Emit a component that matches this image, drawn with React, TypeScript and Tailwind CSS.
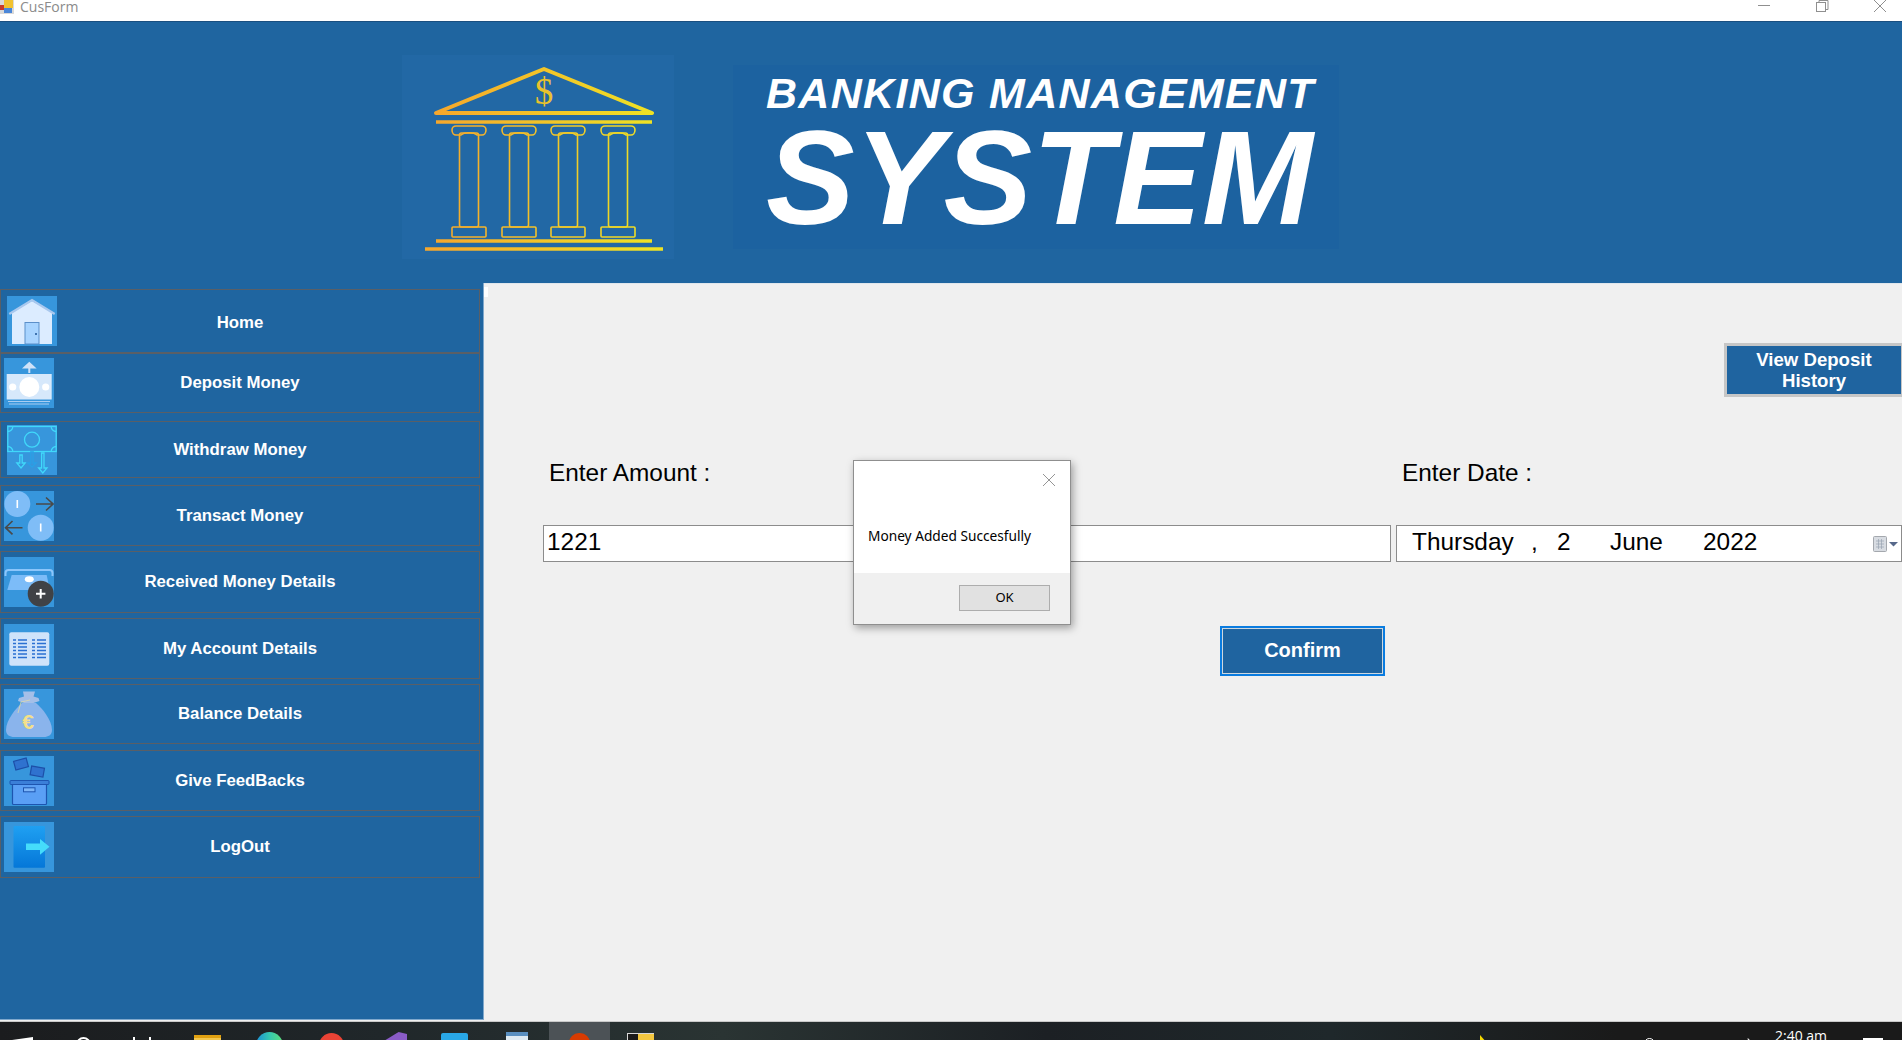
import { FC, ReactNode } from "react";

const IconBox: FC<{ children: ReactNode; className: string }> = ({ children, className }) => (
  <svg viewBox="0 0 50 50" className={`w-[50px] h-[50px] shrink-0 bg-[#3796dc] ${className}`}>
    {children}
  </svg>
);

const HomeIcon = () => (
  <>
    <path d="M5 16 25 5l20 11v32H5z" fill="#dcecff" />
    <path d="M2.3 18 25 4l22.7 14" fill="none" stroke="#a9c8ee" strokeWidth="2.2" />
    <rect x="18" y="26.5" width="14" height="21.5" fill="#a8d4ff" stroke="#5b8fc9" strokeWidth="1" />
    <rect x="28" y="37" width="2" height="2" fill="#3f74b0" />
  </>
);

const DepositIcon = () => (
  <>
    <path d="M25.3 15V8M20.5 9.5l4.8-4.5 4.8 4.5z" stroke="#cfe2f8" strokeWidth="2" fill="#cfe2f8" />
    <rect x="2.7" y="16" width="45" height="25.5" fill="#d6e8fb" />
    <circle cx="25.3" cy="29" r="10" fill="#fff" />
    <circle cx="8.7" cy="29" r="3.6" fill="#fff" />
    <circle cx="41.7" cy="29" r="3.6" fill="#fff" />
    <path d="M4 43.5h42M5 46h40" stroke="#a9cdf2" strokeWidth="1" />
  </>
);

const WithdrawIcon = () => (
  <g fill="none" stroke="#40d8fa" strokeWidth="1.3">
    <rect x="0.8" y="1.5" width="48.4" height="25" />
    <circle cx="25" cy="14.7" r="7.5" />
    <path d="M.8 6.5a5 5 0 0 0 5-5M44.2 1.5a5 5 0 0 0 5 5M.8 21.5a5 5 0 0 1 5 5M44.2 26.5a5 5 0 0 1 5-5" />
    <path d="M12.8 30h2.4v8h3l-4.2 5-4.2-5h3z" />
    <path d="M23.8 27h2.4v11h3l-4.2 4-4.2-4h3z" stroke="#2aa0e6" />
    <path d="M34.6 28h2.4v15h3l-4.2 5-4.2-5h3z" />
  </g>
);

const TransactIcon = () => (
  <>
    <circle cx="13.3" cy="13" r="13" fill="#7fbdf7" />
    <circle cx="36.7" cy="36.7" r="13" fill="#7fbdf7" />
    <path d="M13.3 9v8M36.7 32.5v8" stroke="#fff" strokeWidth="1.6" />
    <path d="M32 13h17M42 6.5l7 6.5-7 6.5M18.5 36.7H1.5M8.5 30l-7 6.7 7 6.7" fill="none" stroke="#4a4a4a" strokeWidth="1.6" />
  </>
);

const ReceivedIcon = () => (
  <>
    <path d="M1.5 19v-3q0-3 3-3h41q3 0 3 3v3" fill="none" stroke="#8cc6fb" strokeWidth="2" />
    <path d="M7.7 18h35l3 15H3.3z" fill="#7cbcf8" />
    <ellipse cx="25.3" cy="22.3" rx="4.5" ry="3" fill="#fff" />
    <circle cx="36.7" cy="36.7" r="13" fill="#404246" />
    <path d="M36.7 32v9.4M32 36.7h9.4" stroke="#fff" strokeWidth="2" />
  </>
);

const AccountIcon = () => (
  <>
    <rect x="5.3" y="8.3" width="40" height="33.4" rx="2" fill="#cfe3fa" />
    <path
      d="M9 16h3M14 16h9M28 16h3M33 16h9M9 19.5h3M14 19.5h9M28 19.5h3M33 19.5h9M9 23h3M14 23h9M28 23h3M33 23h9M9 26.5h3M14 26.5h9M28 26.5h3M33 26.5h9M9 30h3M14 30h9M28 30h3M33 30h9M9 33.5h3M14 33.5h9M28 33.5h3M33 33.5h9"
      stroke="#2a70d2"
      strokeWidth="1.5"
    />
  </>
);

const BalanceIcon = () => (
  <>
    <path d="M19 2.5h12l-1.5 5 5 1.5 1 3-6 2H20l-6-2 1-3 5-1.5z" fill="#a4bfe8" />
    <path d="M18 14h14c6 5 16 17 16 27 0 5-4 7-8 7H10c-4 0-8-2-8-7 0-10 10-22 16-27z" fill="#8ab4ec" />
    <path d="M14 24l3-11 9-2" fill="none" stroke="#e8dca0" strokeWidth="0.7" />
    <text x="24" y="40" textAnchor="middle" fontSize="21" fill="#f3e08a" fontFamily="'Liberation Sans', sans-serif">
      €
    </text>
  </>
);

const FeedbackIcon = () => (
  <>
    <rect x="10.5" y="3.5" width="13" height="9" transform="rotate(-15 17 8)" fill="#2f72cf" stroke="#1d4fa8" strokeWidth="1.2" />
    <rect x="26.8" y="11" width="13" height="9" transform="rotate(10 33 15.5)" fill="#2f72cf" stroke="#1d4fa8" strokeWidth="1.2" />
    <rect x="8.5" y="28" width="34" height="20.5" rx="1" fill="#5a9ff5" stroke="#1d55b0" strokeWidth="1.2" />
    <rect x="6" y="24.5" width="39" height="4" rx="1" fill="#3b7fd8" stroke="#1d55b0" strokeWidth="1" />
    <rect x="19.5" y="31.8" width="11.5" height="4" fill="#7db5f8" stroke="#1d55b0" strokeWidth="1" />
  </>
);

const LogoutIcon = () => (
  <>
    <defs>
      <linearGradient id="door" x1="0" y1="0" x2="0" y2="1">
        <stop offset="0" stopColor="#1fa0f2" />
        <stop offset="1" stopColor="#0577d8" />
      </linearGradient>
    </defs>
    <rect x="9.5" y="4" width="31.5" height="41.7" rx="1" fill="url(#door)" />
    <path d="M22 21.5h14V17l9.5 7.7-9.5 8v-4.7H22z" fill="#45dcfb" />
  </>
);

const menu = [
  { label: "Home", row: "h-[64px]", icon: <HomeIcon />, left: "ml-[6px]", text: "pr-[56px] pt-[3px]" },
  { label: "Deposit Money", row: "h-[60px]", icon: <DepositIcon />, left: "ml-[3px]", text: "pr-[53px]" },
  { label: "Withdraw Money", row: "h-[57px] mt-[8px]", icon: <WithdrawIcon />, left: "ml-[6px]", text: "pr-[56px] pt-[1px]" },
  { label: "Transact Money", row: "h-[61px] mt-[7px]", icon: <TransactIcon />, left: "ml-[3px]", text: "pr-[53px]" },
  { label: "Received Money Details", row: "h-[62px] mt-[5px]", icon: <ReceivedIcon />, left: "ml-[3px]", text: "pr-[53px]" },
  { label: "My Account Details", row: "h-[61px] mt-[5px]", icon: <AccountIcon />, left: "ml-[3px]", text: "pr-[53px]" },
  { label: "Balance Details", row: "h-[60px] mt-[5px]", icon: <BalanceIcon />, left: "ml-[3px]", text: "pr-[53px]" },
  { label: "Give FeedBacks", row: "h-[61px] mt-[6px]", icon: <FeedbackIcon />, left: "ml-[3px]", text: "pr-[53px]" },
  { label: "LogOut", row: "h-[62px] mt-[5px]", icon: <LogoutIcon />, left: "ml-[3px]", text: "pr-[53px]" },
];

const BankLogo = () => (
  <svg viewBox="0 0 272 204" className="w-[272px] h-[204px]">
    <defs>
      <linearGradient id="gold" gradientUnits="userSpaceOnUse" x1="34" y1="0" x2="250" y2="0">
        <stop offset="0" stopColor="#f6a72c" />
        <stop offset="1" stopColor="#efe224" />
      </linearGradient>
    </defs>
    <path d="M34 58 142 14l108 44z" fill="none" stroke="url(#gold)" strokeWidth="4" strokeLinejoin="round" />
    <text x="142" y="49" textAnchor="middle" fontSize="37" fill="#e8c22c" fontFamily="'Liberation Serif', serif">
      $
    </text>
    <path d="M34 67h216M34 186h216M23 194h238" stroke="url(#gold)" strokeWidth="3.5" />
    {[67, 117, 166, 216].map((x) => (
      <g key={x} fill="none" stroke="url(#gold)" strokeWidth="1.6">
        <rect x={x - 9.5} y="78" width="19" height="94" rx="2" fill="#2268a5" />
        <path d={`M${x - 17} 75a4 4 0 0 1 4-4h26a4 4 0 0 1 4 4c0 3-2 5-4 5h-5c-3-3-13-3-16 0h-5c-2 0-4-2-4-5z`} />
        <rect x={x - 17} y="172" width="34" height="10" rx="1" />
      </g>
    ))}
  </svg>
);

const TaskIcon: FC<{ className: string; children?: ReactNode }> = ({ className, children }) => (
  <div className={`shrink-0 ${className}`}>{children}</div>
);

export default function App() {
  return (
    <div className="w-[1902px] h-[1040px] overflow-hidden flex flex-col bg-[#f0f0f0] font-['Liberation_Sans',sans-serif]">
      {/* title bar, cut off at the top */}
      <div className="h-[21px] shrink-0 bg-white flex items-start">
        <svg viewBox="0 0 14 14" className="w-[14px] h-[14px] shrink-0">
          <rect x="0" y="0" width="14" height="14" fill="#d9d9d9" />
          <rect x="4" y="0" width="9" height="8" fill="#f2c230" />
          <rect x="0" y="5" width="4" height="5" fill="#c8392b" />
          <rect x="4" y="8" width="8" height="5" fill="#4a86d8" />
        </svg>
        <span className="ml-[6px] text-[14px] leading-[13px] text-[#8b8b8b] font-['Open_Sans',sans-serif]">CusForm</span>
        <svg viewBox="0 0 130 13" className="ml-auto mr-[15px] w-[130px] h-[13px]" fill="none" stroke="#8f8f8f" strokeWidth="1">
          <path d="M1 5.500h12" />
          <rect x="59.500" y="2.500" width="9" height="9" />
          <path d="M62 2.500V.5h9v9h-2.500" />
          <path d="M117 0l12 12M129 0l-12 12" />
        </svg>
      </div>

      {/* header */}
      <div className="h-[262px] shrink-0 bg-[#1f65a0] border-t border-[#1a4f80] flex items-start">
        <div className="ml-[402px] mt-[33px] bg-[#2268a5]">
          <BankLogo />
        </div>
        <div className="ml-[59px] mt-[43px] w-[606px] h-[184px] bg-[#1c62a0] pl-[33px] pt-[4px] flex flex-col text-white font-bold italic">
          <div className="text-[43px] leading-[48px] tracking-[1.300px] whitespace-nowrap">BANKING MANAGEMENT</div>
          <div className="text-[133px] leading-[133px] -mt-[5px] whitespace-nowrap">SYSTEM</div>
        </div>
      </div>

      <div className="flex-1 flex min-h-0">
        {/* side menu */}
        <div className="w-[484px] shrink-0 h-[737px] bg-[#1f65a0] border-r border-b border-[#7fa8cc] pt-[6px] flex flex-col">
          {menu.map((m) => (
            <div
              key={m.label}
              className={`w-[480px] shrink-0 border border-[#5a5f66] flex items-center text-white font-bold text-[16.800px] ${m.row}`}
            >
              <IconBox className={m.left}>{m.icon}</IconBox>
              <span className={`flex-1 text-center ${m.text}`}>{m.label}</span>
            </div>
          ))}
        </div>

        {/* deposit form */}
        <div className="relative flex-1 min-w-0 border-t border-[#dfe6ec] bg-[#f0f0f0]">
          <div className="absolute left-0 top-[3px] w-[4px] h-[10px] bg-white" />
          <button className="block ml-[1240px] mt-[59px] w-[180px] h-[54px] bg-[#1f64a0] border-[3px] border-[#c6c6c6] text-white font-bold text-[18.600px] leading-[21px]">
            View Deposit
            <br />
            History
          </button>

          <div className="flex mt-[62px] text-[24.400px] leading-[28px] text-black">
            <span className="ml-[65px] w-[853px]">Enter Amount :</span>
            <span>Enter Date :</span>
          </div>

          <div className="flex mt-[38px] text-[24.400px] text-black">
            <div className="ml-[59px] w-[848px] h-[37px] bg-white border border-[#8c8c8c] pl-[3px] pb-[2px] flex items-center">1221</div>
            <div className="ml-[5px] w-[506px] shrink-0 h-[37px] bg-white border border-[#8c8c8c] pl-[15px] pr-[2px] pb-[2px] flex items-center">
              <span className="w-[119px]">Thursday</span>
              <span className="w-[26px]">,</span>
              <span className="w-[53px]">2</span>
              <span className="w-[93px]">June</span>
              <span>2022</span>
              <svg viewBox="0 0 26 16" className="ml-auto mt-[2px] w-[26px] h-[16px]">
                <rect x="0.500" y="0.500" width="13" height="15" rx="1" fill="#d8dce2" stroke="#a4a8ae" />
                <path d="M3 5h8M3 8h8M3 11h8M5.500 3v10M8.500 3v10" stroke="#9aa4b2" strokeWidth="0.700" />
                <path d="M16 6h9l-4.500 4.500z" fill="#56688a" />
              </svg>
            </div>
          </div>

          <button className="block ml-[736px] mt-[64px] w-[165px] h-[50px] pb-[2px] bg-[#1f64a0] border-2 border-[#0a7ce0] outline outline-1 -outline-offset-3 outline-[#cfd8df] text-white font-bold text-[20px]">
            Confirm
          </button>

          {/* message box */}
          <div className="absolute left-[369px] top-[176px] w-[218px] h-[165px] flex flex-col bg-white border border-[#8f8f8f] shadow-[2px_3px_8px_rgba(0,0,0,0.35)] font-['Noto_Sans',sans-serif]">
            <div className="h-[112px] flex flex-col">
              <svg viewBox="0 0 12 12" className="self-end mt-[13px] mr-[15px] w-[12px] h-[12px]" fill="none" stroke="#7a7a7a" strokeWidth="0.800">
                <path d="M0 0l12 12M12 0 0 12" />
              </svg>
              <div className="mt-[41px] ml-[14px] text-[13.700px] leading-[18px] text-black whitespace-nowrap">Money Added Succesfully</div>
            </div>
            <div className="flex-1 bg-[#f0f0f0] flex justify-end items-start pt-[12px] pr-[20px]">
              <button className="w-[91px] h-[26px] bg-[#e1e1e1] border border-[#adadad] text-[13px] text-black">OK</button>
            </div>
          </div>
        </div>
      </div>

      {/* task bar, only the top of it is on the picture */}
      <div className="h-[19px] shrink-0 border-t border-[#c9c9c9] bg-[linear-gradient(90deg,#1b1c1e_0%,#20272a_20%,#2a3433_38%,#1c2024_55%,#1f282b_70%,#1a1a1a_85%,#1a1a1a_100%)] flex items-start overflow-hidden">
        <TaskIcon className="ml-[12px] mt-[15px] w-[21px] h-[6px] bg-white [clip-path:polygon(0_50%,100%_0,100%_100%,0_100%)]" />
        <TaskIcon className="ml-[43px] mt-[15px] w-[15px] h-[15px] rounded-full border-2 border-white" />
        <TaskIcon className="ml-[42px] mt-[15px] w-[18px] h-[6px] border-x-2 border-white" />
        <TaskIcon className="ml-[43px] mt-[13px] w-[27px] h-[8px] bg-[#f3c74f] border-t-[3px] border-[#e0a010]" />
        <TaskIcon className="ml-[35px] mt-[10px] w-[27px] h-[27px] rounded-full bg-[linear-gradient(90deg,#1a8fd8,#35c8b0,#5ede7a)]" />
        <TaskIcon className="ml-[36px] mt-[11px] w-[25px] h-[25px] rounded-full bg-[#ea4335]" />
        <TaskIcon className="ml-[35px] mt-[10px] w-[28px] h-[20px] bg-[#8a5cc8] [clip-path:polygon(0_60%,70%_0,100%_10%,100%_100%,0_100%)]" />
        <TaskIcon className="ml-[34px] mt-[11px] w-[27px] h-[12px] bg-[#29a8e8] rounded-t-[2px]" />
        <TaskIcon className="ml-[38px] mt-[10px] w-[22px] h-[12px] bg-[linear-gradient(180deg,#5a8fc0_0_30%,#dfeaf2_30%)]" />
        <TaskIcon className="ml-[21px] w-[61px] h-[19px] bg-[#4c5256] flex justify-center pt-[11px]">
          <div className="w-[21px] h-[20px] rounded-full bg-[#d83b01]" />
        </TaskIcon>
        <TaskIcon className="ml-[17px] mt-[11px] w-[27px] h-[10px] border-t border-l border-[#d8d8d8] bg-[linear-gradient(90deg,#1a1a1a_0_40%,#f3c740_40%)]" />
        <TaskIcon className="ml-[826px] mt-[13px] w-[7px] h-[8px] bg-[#f5d800] [clip-path:polygon(0_0,100%_100%,0_100%)]" />
        <TaskIcon className="ml-[157px] mt-[16px] w-[11px] h-[11px] rounded-full border border-white" />
        <TaskIcon className="ml-[91px] mt-[17px] w-[4px] h-[4px] border-t border-r border-white rotate-45" />
        <span className="ml-[25px] mt-[5px] text-[14px] leading-[18px] text-white font-['Open_Sans',sans-serif] whitespace-nowrap">2:40 am</span>
        <TaskIcon className="ml-[36px] mt-[16px] w-[20px] h-[5px] bg-white" />
      </div>
    </div>
  );
}
